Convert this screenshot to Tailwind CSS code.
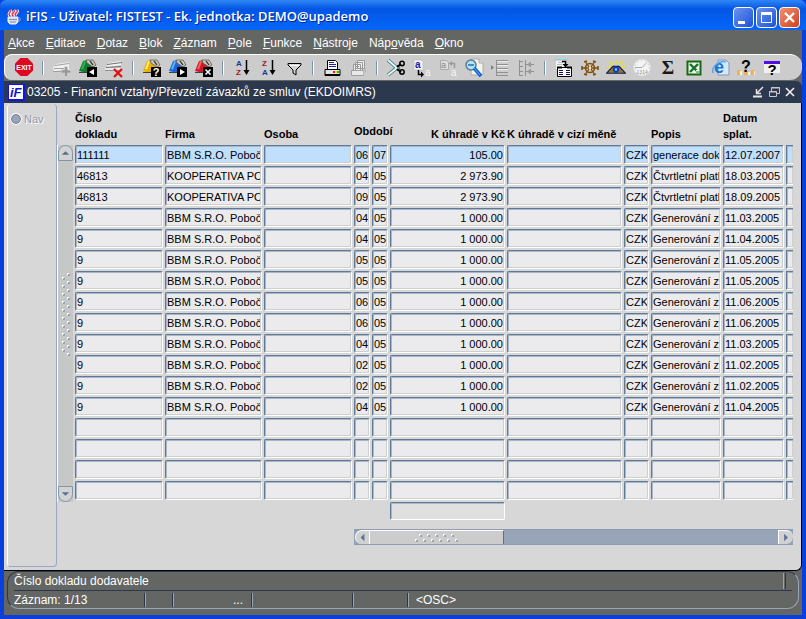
<!DOCTYPE html>
<html lang="cs">
  <head>
    <meta charset="UTF-8" />
    <meta name="viewport" content="width=device-width, initial-scale=1.0" />
    <title>iFIS</title>
    <script src="https://cdn.jsdelivr.net/npm/@tailwindcss/browser@4"></script>
  </head>
  <body
    class="min-h-screen flex flex-col bg-[#0a3fdc] font-['Liberation_Sans',Arial,sans-serif] text-xs text-black"
  >
    <!-- Title bar -->
    <header
      class="h-[30px] flex items-center pl-[6px] pr-[6px] rounded-t-md bg-linear-to-b from-[#2f86f5] via-[#0355e4] via-30% to-[#0566fa]"
    >
      <svg class="w-4 h-4 mt-1" viewBox="0 0 16 16">
        <path d="M2 8h10v5l-2 2H4l-2-2z" fill="#d8dcec" stroke="#f4f4f8" />
        <path d="M12 9h2v3h-2M3 10.500h8M4 13h6" fill="none" stroke="#8890b8" />
        <path d="M4 7c-3-3 2-3 0-6M7 7c-3-3 3-3 1-6M10 7c-3-3 3-3 1-6" fill="none" stroke="#fff" stroke-width="3" />
        <path d="M4 7c-3-3 2-3 0-6M7 7c-3-3 3-3 1-6M10 7c-3-3 3-3 1-6" fill="none" stroke="#e03040" stroke-width="1.400" />
      </svg>
      <h1
        class="flex-1 ml-1 mt-1 text-[13px] font-semibold text-white whitespace-nowrap font-['Open_Sans','Noto_Sans',sans-serif] [text-shadow:1px_1px_0_#06248c]"
      >
        iFIS - Uživatel: FISTEST - Ek. jednotka: DEMO@upademo
      </h1>
      <div class="flex gap-[2px] mt-1">
        <button aria-label="Minimalizovat" class="w-[21px] h-[21px] rounded-sm border border-white bg-linear-to-br from-[#6a92f0] to-[#1c50d8]">
          <svg class="w-full h-full" viewBox="0 0 19 19"><path d="M4 13h7v3H4z" fill="#fff" /></svg>
        </button>
        <button aria-label="Maximalizovat" class="w-[21px] h-[21px] rounded-sm border border-white bg-linear-to-br from-[#6a92f0] to-[#1c50d8]">
          <svg class="w-full h-full" viewBox="0 0 19 19"><path d="M4.500 5.500h10v9h-10z" fill="none" stroke="#fff" /><path d="M4 4h11v3H4z" fill="#fff" /></svg>
        </button>
        <button aria-label="Zavřít" class="w-[21px] h-[21px] rounded-sm border border-white bg-linear-to-br from-[#f09070] to-[#d03c10]">
          <svg class="w-full h-full" viewBox="0 0 19 19"><path d="M5 5l9 9M14 5l-9 9" stroke="#fff" stroke-width="2.400" /></svg>
        </button>
      </div>
    </header>

    <div class="flex-1 flex flex-col mx-1 mb-1 bg-[#646664]">
      <!-- Menu -->
      <nav class="h-6 flex items-center gap-[11px] pl-1 pt-[2px] text-white whitespace-nowrap">
        <a href="#"><u>A</u>kce</a>
        <a href="#"><u>E</u>ditace</a>
        <a href="#"><u>D</u>otaz</a>
        <a href="#"><u>B</u>lok</a>
        <a href="#"><u>Z</u>áznam</a>
        <a href="#"><u>P</u>ole</a>
        <a href="#"><u>F</u>unkce</a>
        <a href="#"><u>N</u>ástroje</a>
        <a href="#">Náp<u>o</u>věda</a>
        <a href="#"><u>O</u>kno</a>
      </nav>

      <!-- Toolbar -->
      <div id="toolbar" class="h-[26px] flex items-center pl-[6px] bg-[#cbcccb] rounded-l-lg rounded-r-xl border-t border-l border-white"></div>

      <!-- Form window -->
      <section class="flex-1 flex flex-col mt-px">
        <div class="h-[22px] flex items-center pl-1 pr-1 bg-[#2c384e] text-white rounded-tr-md">
          <svg class="w-[17px] h-[17px]" viewBox="0 0 17 17">
            <path d="M0 0h17v17H0z" fill="#1414e0" />
            <path d="M1 1h14v14H1z" fill="#fff" />
            <text x="2" y="13" font-size="13" font-weight="bold" font-style="italic" fill="#1414c8">iF</text>
          </svg>
          <h2 class="flex-1 ml-[2px] whitespace-nowrap">
            03205 - Finanční vztahy/Převzetí závazků ze smluv (EKDOIMRS)
          </h2>
          <div class="flex">
            <button aria-label="Ikona" class="w-4 h-4">
              <svg viewBox="0 0 16 16" fill="none" stroke="#e4e4e4"><path d="M3 12.500h9" stroke-width="2" /><path d="M13 3L7 9M6.500 5v4.500H11" stroke-width="1.500" /></svg>
            </button>
            <button aria-label="Obnovit" class="w-4 h-4">
              <svg viewBox="0 0 16 16" fill="none" stroke="#c8c8c8"><path d="M5.500 7V3.500h8v6H11" /><path d="M5 4h9" /><path d="M3.500 7.500h7v5h-7zM3 8h8" /></svg>
            </button>
            <button aria-label="Zavřít formulář" class="w-4 h-4">
              <svg viewBox="0 0 16 16" stroke="#f0f0f0" stroke-width="1.600"><path d="M4 4l8 8M12 4l-8 8" /></svg>
            </button>
          </div>
        </div>

        <div class="flex-1 flex bg-[#d7d7d7] border-b border-black border-r rounded-br-md">
          <aside class="w-[50px] shrink-0 ml-[3px] mt-px mb-[3px] border-l border-l-white border-r border-b border-[#98a8c0] rounded-sm pt-2 pl-[3px]">
            <label class="flex items-center gap-[3px] text-[11px] text-[#8f9cb2] [text-shadow:1px_1px_0_#fff]">
              <input type="radio" disabled class="appearance-none w-[10px] h-[10px] rounded-full bg-[#98a4b8] border border-[#6c7890] outline outline-white" />
              Nav
            </label>
          </aside>

          <!-- Record scrollbar -->
          <div class="w-4 shrink-0 mt-[42px] mb-[68px] flex flex-col bg-[#c6c8c8] border-l border-white">
            <button aria-label="Předchozí záznam" class="h-4 rounded-t-full border border-[#8493ac] bg-[#d2d3d2]">
              <svg class="w-full h-full" viewBox="0 0 14 14"><path d="M3 9h8L7 5z" fill="#5a7098" /></svg>
            </button>
            <div class="flex-1 flex items-start justify-center pt-[112px]">
              <svg class="w-3 h-[84px]" viewBox="0 0 12 84">
                <defs>
                  <pattern id="gripV" width="12" height="8" patternUnits="userSpaceOnUse">
                    <path d="M8 1h2v2H8zM3 5h2v2H3z" fill="#98a4b8" />
                    <path d="M7 0h2v1H8v1H7zM2 4h2v1H3v1H2z" fill="#fff" />
                  </pattern>
                </defs>
                <rect width="12" height="84" fill="url(#gripV)" />
              </svg>
            </div>
            <button aria-label="Další záznam" class="h-4 rounded-b-full border border-[#8493ac] bg-[#d2d3d2]">
              <svg class="w-full h-full" viewBox="0 0 14 14"><path d="M3 5h8L7 9z" fill="#5a7098" /></svg>
            </button>
          </div>

          <div class="flex-1 min-w-0 ml-[2px] mr-2">
            <table class="w-full table-fixed border-collapse">
              <colgroup>
                <col class="w-[90px]" />
                <col class="w-[99px]" />
                <col class="w-[90px]" />
                <col class="w-[18px]" />
                <col class="w-[18px]" />
                <col class="w-[117px]" />
                <col class="w-[117px]" />
                <col class="w-[27px]" />
                <col class="w-[72px]" />
                <col class="w-[63px]" />
                <col />
              </colgroup>
              <thead>
                <tr class="h-[42px] align-bottom text-left text-[11px] leading-4 whitespace-nowrap">
                  <th class="pb-[3px]">Číslo<br />dokladu</th>
                  <th class="pb-[3px]">Firma</th>
                  <th class="pb-[3px]">Osoba</th>
                  <th class="pb-[6px]" colspan="2">Období</th>
                  <th class="pb-[3px] pr-[2px] text-right">K úhradě v Kč</th>
                  <th class="pb-[3px]">K úhradě v cizí měně</th>
                  <th></th>
                  <th class="pb-[3px]">Popis</th>
                  <th class="pb-[3px]">Datum<br />splat.</th>
                  <th></th>
                </tr>
              </thead>
              <tbody id="rows"></tbody>
            </table>
            <input
              aria-label="Součet K úhradě v Kč"
              class="block ml-[315px] w-[115px] h-[18px] px-[2px] text-right text-[11px] bg-[#e0e0e0] border border-t-[#5f7a99] border-l-[#5f7a99] border-r-white border-b-white rounded-[2px] shadow-[inset_1px_1px_#a8b6c8]"
            />
            <div class="flex h-4 mt-[9px] ml-[279px] bg-[#98a4b8] border-y border-[#8e9cb2] pl-px">
              <button aria-label="Posun vlevo" class="w-[14px] bg-[#d0d1d0] rounded-l-full border-l border-t border-white">
                <svg class="w-full h-full" viewBox="0 0 14 14"><path d="M9 3v8L5 7z" fill="#5a7098" /></svg>
              </button>
              <div class="w-[135px] flex items-center justify-center bg-[#cbcccb] border-l border-t border-white border-r border-r-[#5a7098]">
                <svg class="w-11 h-2" viewBox="0 0 44 8">
                  <defs>
                    <pattern id="gripH" width="8" height="8" patternUnits="userSpaceOnUse">
                      <path d="M5 1h2v2H5zM1 6h2v2H1z" fill="#98a4b8" />
                      <path d="M4 0h2v1H5v1H4zM0 5h2v1H1v1H0z" fill="#fff" />
                    </pattern>
                  </defs>
                  <rect width="44" height="8" fill="url(#gripH)" />
                </svg>
              </div>
              <div class="flex-1"></div>
              <button aria-label="Posun vpravo" class="w-[15px] bg-[#d0d1d0] rounded-r-lg border-l border-t border-white">
                <svg class="w-full h-full" viewBox="0 0 14 14"><path d="M5 3v8l4-4z" fill="#5a7098" /></svg>
              </button>
            </div>
          </div>
        </div>
      </section>

      <!-- Status bar -->
      <footer class="ml-[3px] mr-[3px] mb-[6px] h-[38px] flex flex-col rounded-xl border border-t-[#2c384e] border-l-[#2c384e] border-r-[#98a4b8] border-b-[#98a4b8] text-white">
        <div class="h-[19px] ml-[6px] mr-[6px] flex items-center border-b border-[#2c384e]">
          <span class="flex-1">Číslo dokladu dodavatele</span>
          <span class="w-[3px] h-4 mr-[6px] border-l border-l-[#98a4b8] border-r border-r-[#2c384e]"></span>
        </div>
        <div class="h-[17px] ml-[6px] flex items-center">
          <span class="w-[130px]">Záznam: 1/13</span>
          <span class="w-7 h-[14px] border-l border-[#2c384e] shadow-[inset_1px_0_#98a4b8]"></span>
          <span class="w-[79px] h-[14px] leading-[14px] pr-2 text-right border-l border-[#2c384e] shadow-[inset_1px_0_#98a4b8]">...</span>
          <span class="w-[101px] h-[14px] border-l border-[#2c384e] shadow-[inset_1px_0_#98a4b8]"></span>
          <span class="w-[55px] h-[14px] border-l border-[#2c384e] shadow-[inset_1px_0_#98a4b8]"></span>
          <span class="h-[14px] leading-[14px] pl-2 border-l border-[#2c384e] shadow-[inset_1px_0_#98a4b8]">&lt;OSC&gt;</span>
        </div>
      </footer>
    </div>

    <script>
      // toolbar icons, 20x20 each; null = separator
      const folder = (color, light) => `
        <path d="M1 13L5 3l4-1 8 3-2 10H9z" fill="${color}"/>
        <path d="M3 11l3-8 2 .5-3 8z" fill="${light}"/>
        <path d="M8 2h7l3 5-3 2-6-4z" fill="#c8c8c0" stroke="#605848" stroke-width=".8"/>
        <path d="M12 3l3 4" stroke="#202020" stroke-width="1.200"/>
        <path d="M1 14.500h8" stroke="#404040"/>
        <path d="M9 9h10v10H9z" fill="#000"/>`;
      const card = `
        <path d="M4 5l13-2v4L3 9z" fill="#f2f2f2"/>
        <path d="M3 6.500l15-2M2 9.500l15-1" stroke="#707070"/>
        <path d="M1 10h15v3H1z" fill="#e8e8e8"/>
        <path d="M1 12.500h15" stroke="#909090"/>`;

      const icons = [
        ["Exit", `<path d="M6.500 0h7l5.500 5.500v7L13.500 18h-7L1 12.500v-7z" fill="#dc0822"/><text x="10" y="11.500" font-size="7" font-weight="bold" text-anchor="middle" fill="#fff">EXIT</text>`],
        null,
        ["Vložit záznam", `<path d="M1 10L4 6l13-2v8L2 13z" fill="#f0f0f0"/><path d="M3 7.500l14-2M1 13.500h10M2 10.500h12" stroke="#a0a0a0"/><path d="M14 8v10M9 13h10" stroke="#ddd" stroke-width="4"/><path d="M14 9v9M9.500 13.500h9" stroke="#989898" stroke-width="2.500"/>`],
        ["Uložit", folder("#108030", "#30b050") + `<path d="M16 11v6l-5-3z" fill="#fff"/>`],
        ["Smazat záznam", card + `<path d="M10 11l8 8M18 11l-8 8" stroke="#e01010" stroke-width="2.200"/>`],
        null,
        ["Zadat dotaz", folder("#e8b000", "#ffe870") + `<text x="14" y="18" font-size="11" font-weight="bold" text-anchor="middle" fill="#fff">?</text>`],
        ["Provést dotaz", folder("#1868d8", "#60b0f8") + `<path d="M12 11v6l5-3z" fill="#fff"/>`],
        ["Zrušit dotaz", folder("#d01828", "#f86060") + `<path d="M11.500 11.500l5 5M16.500 11.500l-5 5" stroke="#fff" stroke-width="1.500"/>`],
        null,
        ["Třídit vzestupně", `<text x="4" y="8" font-size="8" font-weight="bold" fill="#1838a0">A</text><text x="4" y="17" font-size="8" font-weight="bold" fill="#a01030">Z</text><path d="M14.500 2v13" stroke="#000" stroke-width="1.500"/><path d="M11.500 12h6l-3 5z"/>`],
        ["Třídit sestupně", `<text x="4" y="8" font-size="8" font-weight="bold" fill="#a01030">Z</text><text x="4" y="17" font-size="8" font-weight="bold" fill="#1838a0">A</text><path d="M14.500 2v13" stroke="#000" stroke-width="1.500"/><path d="M11.500 12h6l-3 5z"/>`],
        ["Filtr", `<path d="M4 5.500h13v1.500l-5 5v5l-3-2v-3l-5-5z" fill="#d4d4d4" stroke="#000"/><path d="M6 7.500h9" stroke="#fff"/>`],
        null,
        ["Tisk", `<path d="M5.500 2.500h8l2 2v7h-10z" fill="#fff" stroke="#000"/><path d="M7 4.500h5M7 6.500h7M7 8.500h7" stroke="#2020a0"/><path d="M3 11.500h15v6H3z" fill="#e4e4e4" stroke="#000"/><path d="M3 17h15" stroke="#000" stroke-width="2"/><path d="M11 13h2v2h-2z" fill="#e02020"/><path d="M13 13h2v2h-2z" fill="#e8d820"/><path d="M15 13h2v2h-2z" fill="#20b020"/>`],
        ["Tisk sestavy", `<path d="M9.500 2.500h7v8h-7zM7.500 4.500h7v8h-7zM5.500 6.500h7v6h-7z" fill="#f0f0f0" stroke="#989898"/><path d="M7 8.500h4M7 10.500h4" stroke="#989898"/><path d="M3.500 12.500h12v5h-12z" fill="#e8e8e8" stroke="#a0a0a0"/><path d="M15 13l3-3v4l-3 3" fill="#bbb"/>`],
        null,
        ["Vyjmout", `<path d="M2 2l11 10M2 17L13 8" stroke="#406868" stroke-width="3.500"/><path d="M2 2l10 9M2 17L12 9" stroke="#e0fcfc" stroke-width="2"/><path d="M11 9l4-3M11 11l4 3" stroke="#000" stroke-width="2"/><circle cx="16" cy="5.500" r="2.200" fill="none" stroke="#000" stroke-width="1.500"/><circle cx="16" cy="14" r="2.200" fill="none" stroke="#000" stroke-width="1.500"/>`],
        ["Kopírovat", `<path d="M2 2h7l2 2v8H2z" fill="#f4f4f4" stroke="#bbb" stroke-width=".6"/><text x="3" y="10" font-size="10" font-weight="bold" fill="#1818b0">a</text><path d="M6.500 12v4.500H9" fill="none" stroke="#000" stroke-width="1.500"/><path d="M9 13.500v6l3-3z"/><text x="13" y="18" font-size="10" fill="#f8f8f8">a</text>`],
        ["Vložit", `<path d="M2.500 2.500h6l2 2v7h-8z" fill="#ddd" stroke="#aaa"/><text x="3" y="10" font-size="9" fill="#888">a</text><path d="M16.500 10V5.500H13" fill="none" stroke="#999" stroke-width="1.500"/><path d="M14 3v5l-3-2.500z" fill="#999"/><text x="13" y="18" font-size="10" fill="#f8f8f8">a</text>`],
        ["Hledat", `<path d="M7 1h8l4 4v12H7z" fill="#f4f4f0" stroke="#aaa"/><path d="M15 1v4h4" fill="#ddd" stroke="#aaa"/><circle cx="7" cy="7" r="5" fill="#a8e8f4" stroke="#607898" stroke-width="1.500"/><path d="M4 7h6" stroke="#3068b0" stroke-width="1.500"/><path d="M10 10l7 8" stroke="#1060d0" stroke-width="3.500"/><path d="M10 10l6 7" stroke="#60b0ff"/>`],
        ["Seznam hodnot", `<path d="M7 2.500h11M7 6.500h11M7 10.500h11M7 14.500h11M7 17.500h11M6.500 2v16" stroke="#909090"/><path d="M1 7v5l3-2.500z" fill="#808080"/><path d="M7 3.500h11M7 7.500h11M7 11.500h11" stroke="#eee"/>`],
        ["Strom", `<path d="M3.500 2v16M9.500 2v16M3 3.500h4M3 8.500h4M3 13.500h4M3 17.500h4M10 6.500h8M10 13.500h8" stroke="#909090"/><path d="M11 6.500l4-3v6zM11 13.500l4-3v6z" fill="#999"/>`],
        null,
        ["Detail", `<path d="M1 1.500h13" stroke="#80d8f8"/><path d="M2 3h10v8H2z" fill="#f4f4f4"/><path d="M4 4.500h5M3 6.500h5" stroke="#bbb"/><path d="M8 3.500h3.500v4" fill="none" stroke="#000" stroke-width="1.500"/><path d="M8.500 6h6l-3 3.500z"/><path d="M3.500 9.500h14v9h-14z" fill="#fff" stroke="#000"/><path d="M5 12.500h4M5 14.500h4M5 16.500h4M12 12.500h4M12 14.500h4M12 16.500h4" stroke="#101060"/><path d="M3 9.500h5M13 9.500h5" stroke="#000" stroke-width="2"/>`],
        ["Nastavení", `<circle cx="10" cy="10" r="4.500" fill="none" stroke="#805010" stroke-width="1.600"/><path d="M2 10h16M5 3l4 6M15 3l-4 6M5 17l4-6M15 17l-4-6" stroke="#805010" stroke-width="1.300"/><path d="M2 8v4M18 8v4M4 4l3-1M16 4l-3-1M4 16l3 1M16 16l-3 1" stroke="#805010" stroke-width="1.600"/><circle cx="10" cy="10" r="1.200" fill="#fff0a0"/>`],
        ["Náhled", `<path d="M10 2v4M3 3l4 4M17 3l-4 4M1 8l4 2M19 8l-4 2" stroke="#f0e020" stroke-width="1.500"/><path d="M1 15l6-6.500h6L19 15z" fill="#fff" stroke="#181840" stroke-width="1.400"/><path d="M2 14.500l5.500-5.500v5.500zM18 14.500L12.500 9v5.500z" fill="#887830"/><circle cx="10" cy="11.500" r="3.200" fill="#1838b0"/><circle cx="10" cy="11.500" r="1.200" fill="#70e0f8"/>`],
        ["Čas", `<circle cx="10" cy="9.500" r="8.500" fill="#f4f4f4" stroke="#d8d8d8"/><path d="M3 9.500h7l5-5" fill="none" stroke="#aaa"/><circle cx="10" cy="9.500" r="7" fill="none" stroke="#bbb" stroke-dasharray="1 3"/><text x="10" y="16" font-size="5" text-anchor="middle" fill="#999">1314</text>`],
        ["Součet", `<text x="10" y="16" font-size="19" font-weight="bold" text-anchor="middle" fill="#181818" font-family="Liberation Serif">Σ</text>`],
        ["Excel", `<path d="M3.500 3.500h13v13h-13z" fill="#e8f4e8" stroke="#186818" stroke-width="2"/><path d="M6 6l8 8M14 6l-8 8" stroke="#187028" stroke-width="2.400"/><path d="M12 12h3v3h-3z" fill="#fff"/><path d="M12 14h3" stroke="#187028"/>`],
        ["Internet", `<path d="M8 2h8l3 3v12H8z" fill="#d8e8fc" stroke="#8098c0"/><text x="4" y="15" font-size="18" font-weight="bold" fill="#1878d0">e</text><path d="M3 15C1 9 9 2 16 4" fill="none" stroke="#50a8f0" stroke-width="1.500"/>`],
        ["Kdo", `<path d="M1 12h4v5H1zM8 13h5v4H8zM15 12h4v5h-4z" fill="#f0b060"/><path d="M4 13h2v4H4zM12 14h2v3h-2zM18 13h1v4h-1z" fill="#fff0d8"/><text x="10" y="14" font-size="16" font-weight="bold" text-anchor="middle">?</text>`],
        ["Nápověda", `<path d="M2 3h16v12H2z" fill="#f0f0f0"/><path d="M2 3h16v3H2z" fill="#5010e0"/><text x="10" y="17" font-size="15" font-weight="bold" text-anchor="middle">?</text>`],
      ];

      document.getElementById("toolbar").innerHTML = icons
        .map((icon) =>
          icon
            ? `<button aria-label="${icon[0]}" class="w-[26px] shrink-0 flex justify-center"><svg class="w-5 h-5" viewBox="0 0 20 20">${icon[1]}</svg></button>`
            : `<span class="w-3 shrink-0 flex justify-center"><span class="w-[2px] h-[14px] bg-[#7d92b0] border-r border-white"></span></span>`
        )
        .join("");

      const columns = ["Číslo dokladu", "Firma", "Osoba", "Období měsíc", "Období rok", "K úhradě v Kč", "K úhradě v cizí měně", "Měna", "Popis", "Datum splat.", "Další"];
      const bbm = "BBM S.R.O. Pobočk";
      const koop = "KOOPERATIVA POJ";
      const data = [
        ["111111", bbm, "06", "07", "105.00", "generace dok", "12.07.2007"],
        ["46813", koop, "04", "05", "2 973.90", "Čtvrtletní platb", "18.03.2005"],
        ["46813", koop, "09", "05", "2 973.90", "Čtvrtletní platb", "18.09.2005"],
        ["9", bbm, "04", "05", "1 000.00", "Generování z", "11.03.2005"],
        ["9", bbm, "04", "05", "1 000.00", "Generování z", "11.04.2005"],
        ["9", bbm, "05", "05", "1 000.00", "Generování z", "11.05.2005"],
        ["9", bbm, "05", "05", "1 000.00", "Generování z", "11.05.2005"],
        ["9", bbm, "06", "05", "1 000.00", "Generování z", "11.06.2005"],
        ["9", bbm, "06", "05", "1 000.00", "Generování z", "11.06.2005"],
        ["9", bbm, "04", "05", "1 000.00", "Generování z", "11.03.2005"],
        ["9", bbm, "02", "05", "1 000.00", "Generování z", "11.02.2005"],
        ["9", bbm, "02", "05", "1 000.00", "Generování z", "11.02.2005"],
        ["9", bbm, "04", "05", "1 000.00", "Generování z", "11.04.2005"],
      ];

      let html = "";
      for (let i = 0; i < 17; i++) {
        const r = data[i];
        const cells = r ? [r[0], r[1], "", r[2], r[3], r[4], "", "CZK", r[5], r[6], ""] : Array(11).fill("");
        const bg = i === 0 ? "bg-[#c0dffd]" : "bg-[#ebeaec]";
        html += `<tr class="h-[21px]">`;
        cells.forEach((value, c) => {
          const align = c === 5 ? "text-right" : "text-left";
          const edge = c === 10 ? "border-r-0" : "rounded-[2px]";
          const pad = c === 10 ? "p-0 pb-[2px]" : "p-0 pb-[2px] pr-[2px]";
          html += `<td class="${pad}"><input aria-label="${columns[c]}" value="${value}" class="block w-full h-[19px] pt-px px-px text-[11px] border border-t-[#5f7a99] border-l-[#5f7a99] border-r-white border-b-white shadow-[inset_1px_1px_#a8b6c8,inset_-1px_-1px_#cdd0cd] ${align} ${edge} ${bg}" /></td>`;
        });
        html += `</tr>`;
      }
      document.getElementById("rows").innerHTML = html;
    </script>
  </body>
</html>
